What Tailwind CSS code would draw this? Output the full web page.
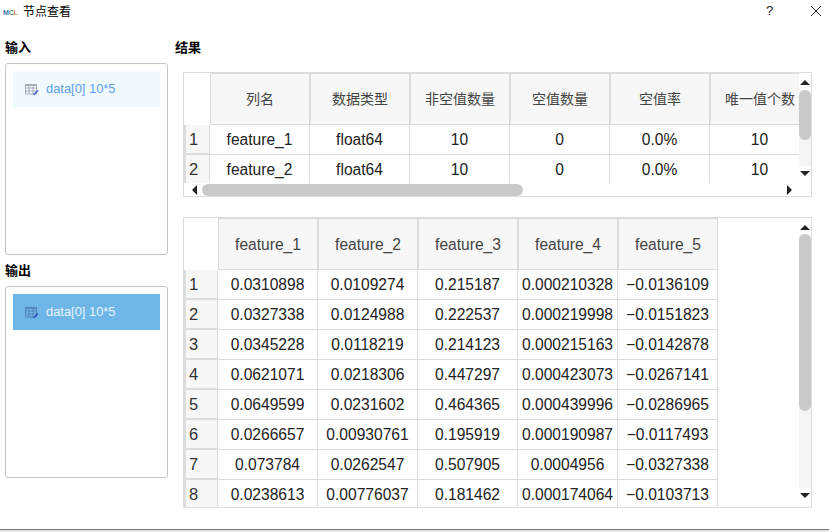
<!DOCTYPE html>
<html lang="en">

<head>
    <meta charset="UTF-8">
    <title>节点查看</title>
    <script src="https://cdn.jsdelivr.net/npm/@tailwindcss/browser@4"></script>
</head>

<body class="bg-white overflow-hidden font-['Liberation_Sans','Noto_Sans_CJK_SC',sans-serif] text-[#222]">
    <div class="flex flex-col w-[829px] h-[532px]">
        <!-- Title bar -->
        <header class="flex items-center h-[24px] shrink-0">
            <div class="flex w-[23px] pl-[3px] text-[7px] leading-none font-bold tracking-[-0.2px]">
                <span class="text-[#2f7f9f]">M</span><span class="text-[#5b8aa0]">C</span><span class="text-[#c98a4a]">L</span>
            </div>
            <span class="text-[12px] leading-none text-black">节点查看</span>
            <span class="ml-[695px] mb-[3px] w-[8px] text-[13px] leading-none text-[#222]">?</span>
            <svg class="ml-[36px] mb-[2px]" width="12" height="12" viewBox="0 0 12 12" fill="none" stroke="#222" stroke-width="1">
                <path d="M1 1 L11 11 M11 1 L1 11" />
            </svg>
        </header>

        <main class="flex flex-1 min-h-0">
            <!-- Left column -->
            <aside class="flex flex-col w-[163px] ml-[5px] pt-[16px] shrink-0">
                <h2 class="h-[16px] mb-[7px] text-[13px] leading-[16px] font-bold text-black">输入</h2>
                <div class="h-[192px] p-[7px] border border-[#c4c4c4] rounded-[3px]">
                    <div class="flex items-center h-[36px] pl-[12px] bg-[#f0f9ff] text-[12.9px] text-[#5f9ff0]">
                        <svg class="mr-[7px]" width="14" height="13" viewBox="0 0 14 13" fill="none">
                            <path d="M0.5 1.5h11v9.5h-11z M0.5 5h11 M0.5 8h11 M4 3v8 M8 3v8" stroke="#a9adb5" stroke-width="1" />
                            <path d="M0.5 1h11v2h-11z" fill="#a9adb5" />
                            <path d="M8.5 12 L13 7.5" stroke="#4a62d8" stroke-width="1.6" />
                        </svg>
                        data[0] 10*5
                    </div>
                </div>
                <h2 class="h-[16px] mt-[8px] mb-[7px] text-[13px] leading-[16px] font-bold text-black">输出</h2>
                <div class="h-[192px] p-[7px] border border-[#c4c4c4] rounded-[3px]">
                    <div class="flex items-center h-[36px] pl-[12px] bg-[#6eb6e8] text-[12.9px] text-[#e6f3fc]">
                        <svg class="mr-[7px]" width="14" height="13" viewBox="0 0 14 13" fill="none">
                            <path d="M0.5 1.5h11v9.5h-11z M0.5 5h11 M0.5 8h11 M4 3v8 M8 3v8" stroke="#5288bd" stroke-width="1" />
                            <path d="M0.5 1h11v2h-11z" fill="#5288bd" />
                            <path d="M8.5 12 L13 7.5" stroke="#2f50d0" stroke-width="1.6" />
                        </svg>
                        data[0] 10*5
                    </div>
                </div>
            </aside>

            <!-- Right column -->
            <section class="flex flex-col w-[637px] ml-[7px] pt-[16px]">
                <h2 class="h-[16px] mb-[16px] text-[13px] leading-[16px] font-bold text-black">结果</h2>

                <!-- Summary table -->
                <div class="flex flex-col w-[629px] h-[125px] ml-[8px] border border-[#dcdcdc]">
                    <div class="flex h-[110px]">
                        <div class="flex-1 overflow-hidden" id="summary"></div>
                        <div class="flex flex-col items-center w-[12px] shrink-0">
                            <svg class="mt-[7px] mb-[5px]" width="10" height="5" viewBox="0 0 10 5"><path d="M5 0 L10 5 H0z" fill="#222" /></svg>
                            <div class="w-full h-[76px] bg-[#f5f5f5]">
                                <div class="w-full h-[50px] rounded-full bg-[#c8c9cb]"></div>
                            </div>
                            <svg class="mt-[5px]" width="10" height="5" viewBox="0 0 10 5"><path d="M0 0 H10 L5 5z" fill="#222" /></svg>
                        </div>
                    </div>
                    <div class="flex items-center h-[13px]">
                        <svg class="ml-[8px] mr-[5px]" width="5" height="10" viewBox="0 0 5 10"><path d="M5 0 V10 L0 5z" fill="#222" /></svg>
                        <div class="w-[321px] h-[12px] rounded-full bg-[#c8c9cb]"></div>
                        <svg class="ml-[264px]" width="5" height="10" viewBox="0 0 5 10"><path d="M0 0 L5 5 L0 10z" fill="#222" /></svg>
                    </div>
                </div>

                <!-- Data table -->
                <div class="flex w-[629px] h-[291px] ml-[8px] mt-[20px] border border-[#dcdcdc]">
                    <div class="flex-1 overflow-hidden" id="data"></div>
                    <div class="flex flex-col items-center w-[12px] shrink-0">
                        <svg class="mt-[7px] mb-[4px]" width="10" height="5" viewBox="0 0 10 5"><path d="M5 0 L10 5 H0z" fill="#222" /></svg>
                        <div class="w-full h-[254px] bg-[#f5f5f5]">
                            <div class="w-full h-[177px] rounded-full bg-[#c8c9cb]"></div>
                        </div>
                        <svg class="mt-[5px]" width="10" height="5" viewBox="0 0 10 5"><path d="M0 0 H10 L5 5z" fill="#222" /></svg>
                    </div>
                </div>
            </section>
        </main>

        <footer class="h-[3px] shrink-0 border-t border-[#777] bg-[#e6e6e6]"></footer>
    </div>

    <script>
        const headCls = 'flex items-center justify-center shrink-0 w-[100px] pt-[1px] bg-[#f7f7f7] border border-[#dcdcdc] text-[#444]';
        const numCls = 'flex items-center shrink-0 pl-[3px] pt-[1px] h-[30px] bg-[#f7f7f7] border-l-2 border-r border-b-2 border-[#dcdcdc] text-[16.5px] text-[#333]';
        const cellCls = 'flex items-center justify-center shrink-0 w-[100px] h-[30px] border-r border-b border-[#dcdcdc] text-[15.6px]';

        function buildTable(id, numW, headH, headSize, head, rows) {
            const cornerW = 'width:' + numW + 'px';
            let html = '<div class="flex w-max ' + headSize + '" style="height:' + headH + 'px"><div class="shrink-0" style="' + cornerW + '"></div>';
            head.forEach(h => { html += `<div class="${headCls}">${h}</div>`; });
            html += '</div>';
            rows.forEach((row, i) => {
                html += `<div class="flex w-max"><div class="${numCls}" style="${cornerW}">${i + 1}</div>`;
                row.forEach(c => { html += `<div class="${cellCls}">${c}</div>`; });
                html += '</div>';
            });
            document.getElementById(id).innerHTML = html;
        }

        buildTable('summary', 26, 52, 'text-[14px]',
            ['列名', '数据类型', '非空值数量', '空值数量', '空值率', '唯一值个数'],
            [
                ['feature_1', 'float64', '10', '0', '0.0%', '10'],
                ['feature_2', 'float64', '10', '0', '0.0%', '10']
            ]);

        buildTable('data', 34, 52, 'text-[15.6px]',
            ['feature_1', 'feature_2', 'feature_3', 'feature_4', 'feature_5'],
            [
                ['0.0310898', '0.0109274', '0.215187', '0.000210328', '−0.0136109'],
                ['0.0327338', '0.0124988', '0.222537', '0.000219998', '−0.0151823'],
                ['0.0345228', '0.0118219', '0.214123', '0.000215163', '−0.0142878'],
                ['0.0621071', '0.0218306', '0.447297', '0.000423073', '−0.0267141'],
                ['0.0649599', '0.0231602', '0.464365', '0.000439996', '−0.0286965'],
                ['0.0266657', '0.00930761', '0.195919', '0.000190987', '−0.0117493'],
                ['0.073784', '0.0262547', '0.507905', '0.0004956', '−0.0327338'],
                ['0.0238613', '0.00776037', '0.181462', '0.000174064', '−0.0103713']
            ]);
    </script>
</body>

</html>
